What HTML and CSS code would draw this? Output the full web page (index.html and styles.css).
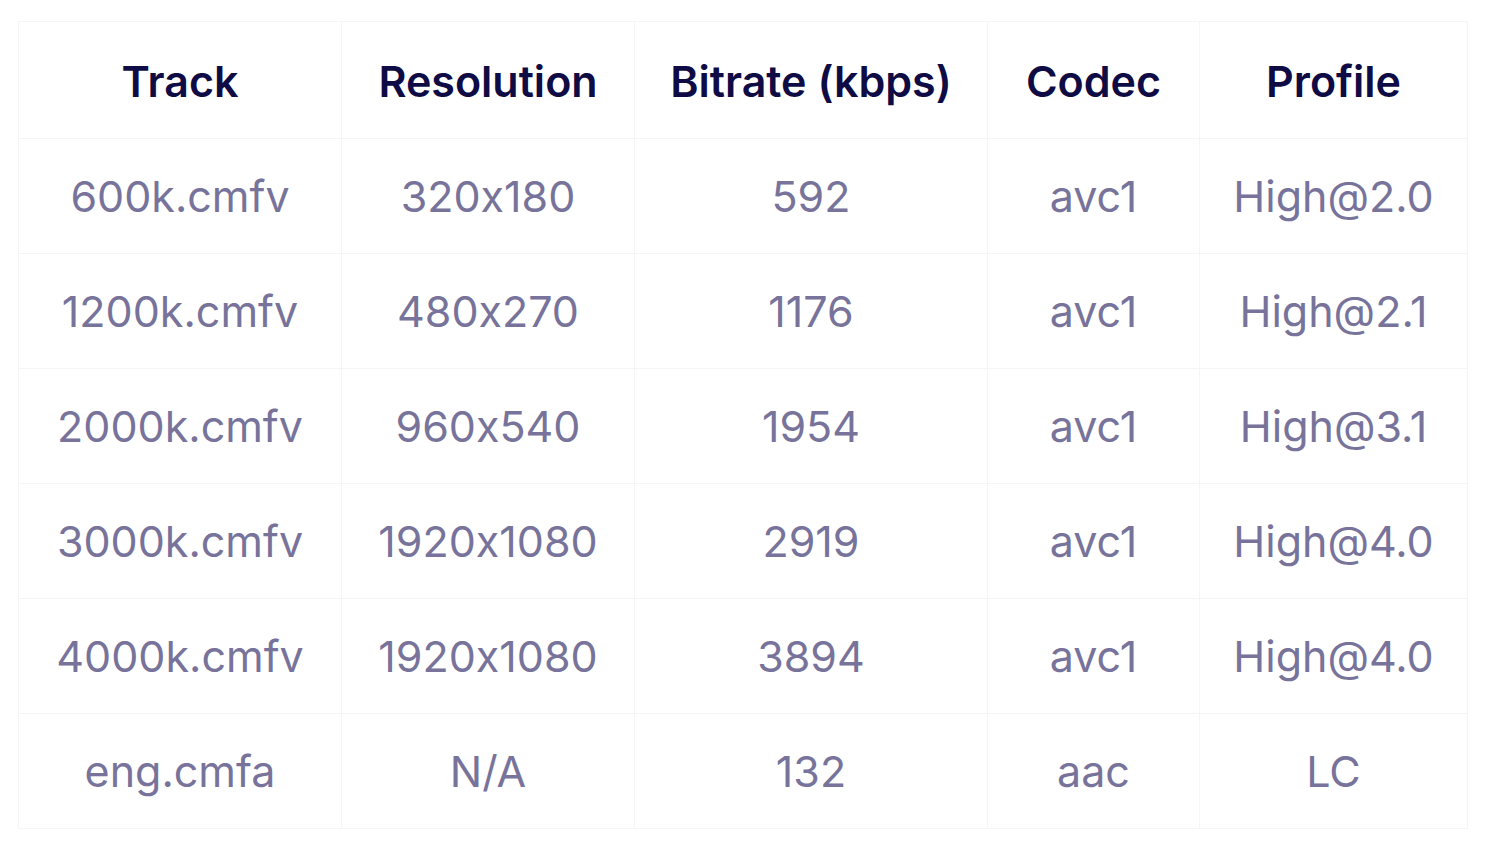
FILE: index.html
```html
<!DOCTYPE html>
<html>
<head>
<meta charset="utf-8">
<link rel="stylesheet" href="styles.css">
</head>
<body>
<div class="wrap">
<table class="tracks">
<colgroup>
<col class="c1"><col class="c2"><col class="c3"><col class="c4"><col class="c5">
</colgroup>
<thead>
<tr><th>Track</th><th>Resolution</th><th>Bitrate (kbps)</th><th>Codec</th><th>Profile</th></tr>
</thead>
<tbody>
<tr><td>600k.cmfv</td><td>320x180</td><td>592</td><td>avc1</td><td>High@2.0</td></tr>
<tr><td>1200k.cmfv</td><td>480x270</td><td>1176</td><td>avc1</td><td>High@2.1</td></tr>
<tr><td>2000k.cmfv</td><td>960x540</td><td>1954</td><td>avc1</td><td>High@3.1</td></tr>
<tr><td>3000k.cmfv</td><td>1920x1080</td><td>2919</td><td>avc1</td><td>High@4.0</td></tr>
<tr><td>4000k.cmfv</td><td>1920x1080</td><td>3894</td><td>avc1</td><td>High@4.0</td></tr>
<tr><td>eng.cmfa</td><td>N/A</td><td>132</td><td>aac</td><td>LC</td></tr>
</tbody>
</table>
</div>
</body>
</html>
```
FILE: styles.css
```css
html, body {
  margin: 0;
  background: #ffffff;
}
.wrap {
  padding: 21px 0 0 18px;
}
.tracks {
  border-collapse: collapse;
  table-layout: fixed;
  width: 1449px;
  font-family: Inter, "Liberation Sans", sans-serif;
  font-feature-settings: "calt" 0;
}
.c1 { width: 323px; }
.c2 { width: 293px; }
.c3 { width: 353px; }
.c4 { width: 212px; }
.c5 { width: 268px; }
.tracks th, .tracks td {
  border: 1px solid #f5f5f8;
  text-align: center;
  padding: 0;
  height: 114px;
}
.tracks th {
  color: #0e0b45;
  font-size: 43px;
  font-weight: 600;
  padding-top: 2px;
}
.tracks td {
  color: #77739a;
  font-size: 43px;
  font-weight: 400;
}
```
